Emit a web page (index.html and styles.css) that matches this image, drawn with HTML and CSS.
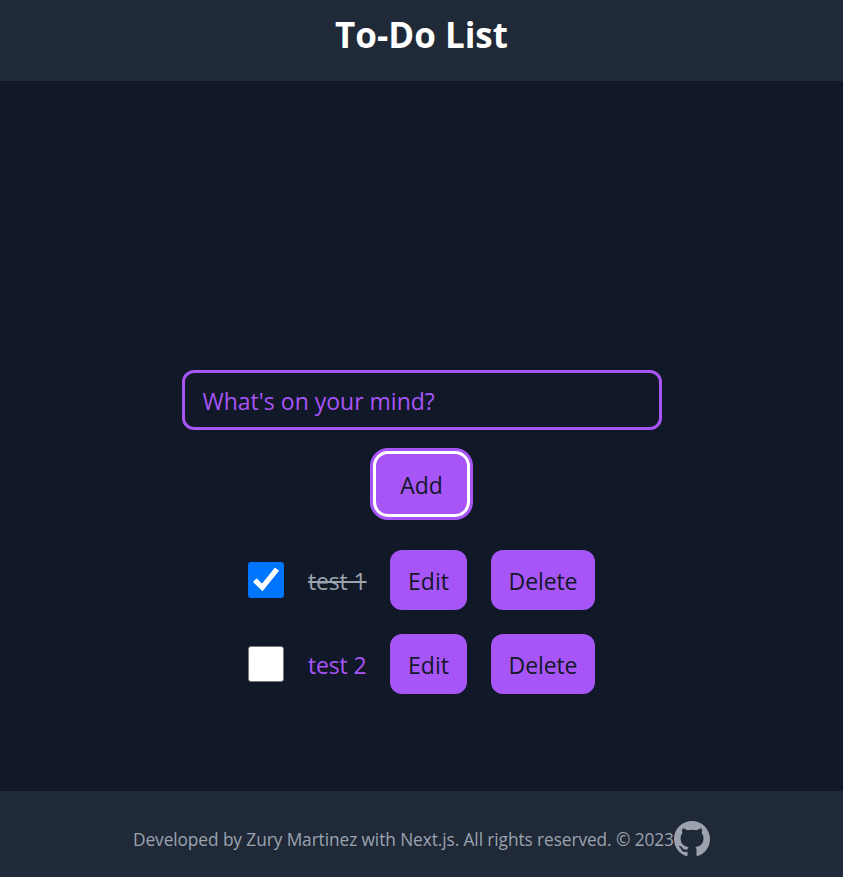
FILE: index.html
```html
<!DOCTYPE html>
<html lang="en">
<head>
<meta charset="utf-8">
<title>To-Do List</title>
<link rel="stylesheet" href="styles.css">
</head>
<body>
<header class="header"><h1 class="title">To-Do List</h1></header>
<main class="main">
  <input class="field" type="text" placeholder="What's on your mind?">
  <button class="btn btn-add">Add</button>
  <ul class="list">
    <li class="item">
      <span class="check checked"><svg viewBox="0 0 36 36"><path d="M6.8 18.2L14.3 25.5L29 7.2" fill="none" stroke="#fff" stroke-width="5.2"/></svg></span>
      <span class="label done">test 1</span>
      <button class="btn btn-edit">Edit</button>
      <button class="btn btn-delete">Delete</button>
    </li>
    <li class="item">
      <span class="check"></span>
      <span class="label">test 2</span>
      <button class="btn btn-edit">Edit</button>
      <button class="btn btn-delete">Delete</button>
    </li>
  </ul>
</main>
<footer class="footer">
  <p class="credit">Developed by Zury Martinez with Next.js. All rights reserved. © 2023</p>
  <svg class="github" viewBox="0 0 16 16"><path d="M8 0C3.58 0 0 3.58 0 8c0 3.54 2.29 6.53 5.47 7.59.4.07.55-.17.55-.38 0-.19-.01-.82-.01-1.49-2.01.37-2.53-.49-2.69-.94-.09-.23-.48-.94-.82-1.13-.28-.15-.68-.52-.01-.53.63-.01 1.08.58 1.23.82.72 1.21 1.87.87 2.33.66.07-.52.28-.87.51-1.07-1.78-.2-3.64-.89-3.64-3.95 0-.87.31-1.59.82-2.15-.08-.2-.36-1.02.08-2.12 0 0 .67-.21 2.2.82.64-.18 1.32-.27 2-.27s1.36.09 2 .27c1.53-1.04 2.2-.82 2.2-.82.44 1.1.16 1.92.08 2.12.51.56.82 1.27.82 2.15 0 3.07-1.87 3.75-3.65 3.95.29.25.54.73.54 1.48 0 1.07-.01 1.93-.01 2.2 0 .21.15.46.55.38A8.01 8.01 0 0 0 16 8c0-4.42-3.58-8-8-8z"/></svg>
</footer>
</body>
</html>
```
FILE: styles.css
```css
* { box-sizing: border-box; }
body {
  margin: 0;
  height: 100vh;
  display: flex;
  flex-direction: column;
  background: #111827;
  color: #a855f7;
  font: 23px/36px "Segoe UI", "Open Sans", sans-serif;
  overflow: hidden;
}
.header {
  height: 81px;
  padding-top: 14px;
  background: #1f2937;
  text-align: center;
}
.title {
  margin: 0;
  color: #fff;
  font-size: 35px;
  line-height: 42px;
  font-weight: 700;
}
.main {
  flex: 1;
  display: flex;
  flex-direction: column;
  align-items: center;
  padding-top: 289px;
}
.field {
  width: 480px;
  height: 60px;
  padding: 2px 18px 0;
  border: 3px solid #a855f7;
  border-radius: 12px;
  background: transparent;
  font: inherit;
}
.field::placeholder { color: #a855f7; opacity: 1; }
.btn {
  height: 60px;
  padding: 1px 0 0;
  border: 0;
  border-radius: 12px;
  background: #a855f7;
  color: #111827;
  font: inherit;
}
.btn-add {
  width: 91px;
  margin: 24px 0 36px;
  box-shadow: 0 0 0 3px #fff, 0 0 0 6px #a855f7;
}
.btn-edit { width: 77px; }
.btn-delete { width: 104px; letter-spacing: -0.1px; }
.list {
  margin: 0;
  padding: 0;
  list-style: none;
  display: grid;
  gap: 24px;
}
.item { display: flex; align-items: center; gap: 24px; }
.check {
  width: 36px;
  height: 36px;
  border: 1px solid #767676;
  border-radius: 3px;
  background: #fff;
}
.checked { border: 0; background: #0075ff; }
.checked svg { display: block; }
.label { width: 58px; padding-top: 1px; letter-spacing: -0.15px; white-space: nowrap; }
.done { color: #9ca3af; text-decoration: line-through; text-decoration-thickness: 2px; }
.footer {
  height: 86px;
  display: flex;
  justify-content: center;
  align-items: center;
  padding-top: 10px;
  background: #1f2937;
  color: #9ca3af;
}
.credit { margin: 0; padding-top: 2px; width: 541px; font-size: 17.3px; letter-spacing: -0.08px; white-space: nowrap; }
.github { width: 36px; height: 36px; fill: #9ca3af; }
```
